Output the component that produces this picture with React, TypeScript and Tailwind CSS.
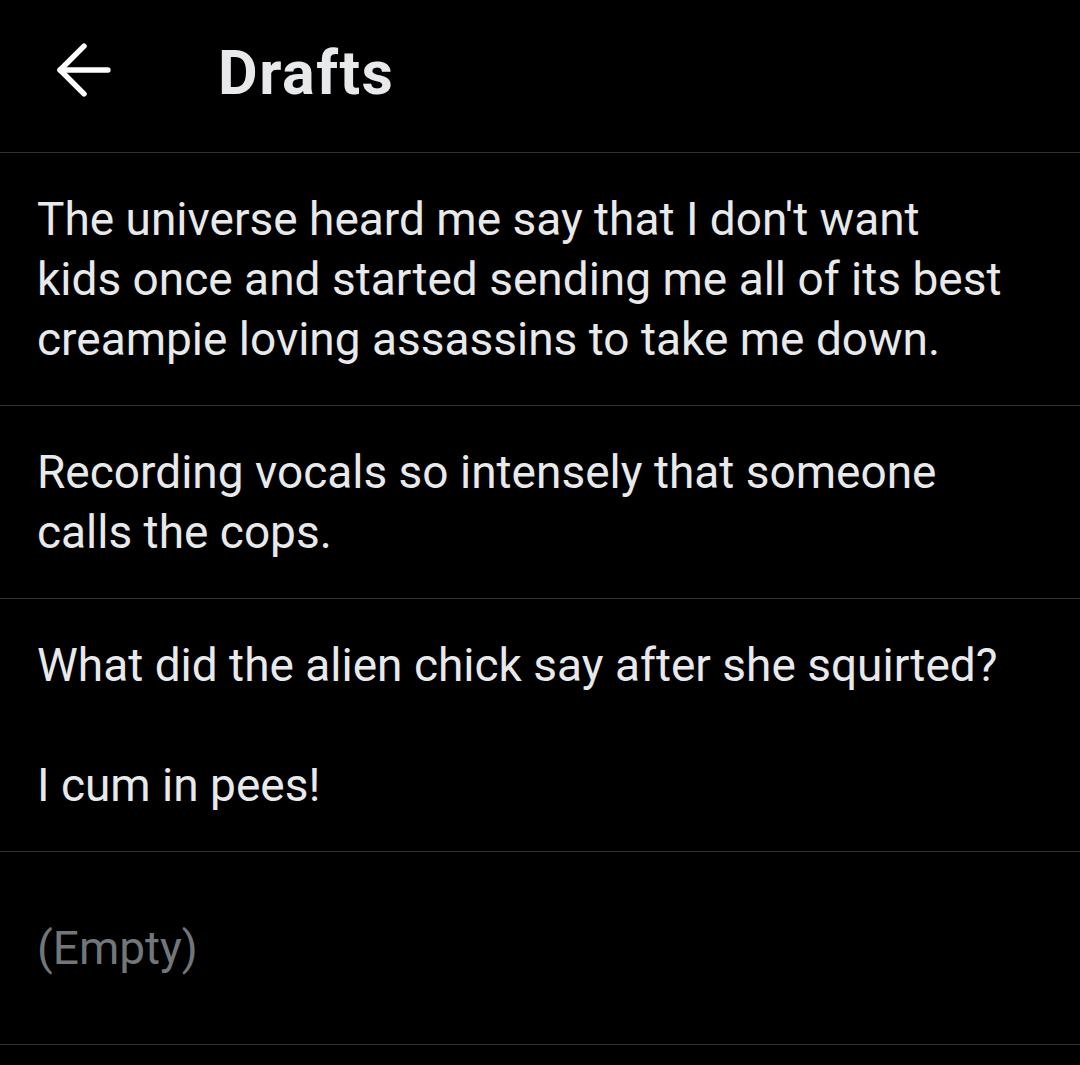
import { ArrowLeft } from "lucide-react"

const drafts = [
    "The universe heard me say that I don't want\nkids once and started sending me all of its best\ncreampie loving assassins to take me down.",
    "Recording vocals so intensely that someone\ncalls the cops.",
    "What did the alien chick say after she squirted?\n\nI cum in pees!",
]

export default function App() {
    return (
        <div className="min-h-[1065px] w-[1080px] bg-black font-['Roboto',sans-serif] text-[#e7e9ea]">
            {/* Header */}
            <div className="h-[153px] flex items-center pb-[6px] border-b border-[#2f3336]">
                <div className="w-[218px] pl-[43px] pb-[6px]">
                    <ArrowLeft className="w-[82px] h-[82px] text-white" strokeWidth={1.6} />
                </div>
                <h1 className="text-[61px] font-bold leading-none tracking-[1.5px] text-[#e7e9ea]">Drafts</h1>
            </div>

            {/* Draft rows */}
            {drafts.map((text, i) => (
                <div key={i} className="px-[37px] py-[36px] border-b border-[#2f3336]">
                    <p className="text-[46px] leading-[60px] whitespace-pre-line">{text}</p>
                </div>
            ))}
            <div className="px-[37px] h-[193px] flex items-center border-b border-[#2f3336]">
                <p className="text-[46px] leading-[60px] text-[#71767b]">(Empty)</p>
            </div>
        </div>
    )
}
